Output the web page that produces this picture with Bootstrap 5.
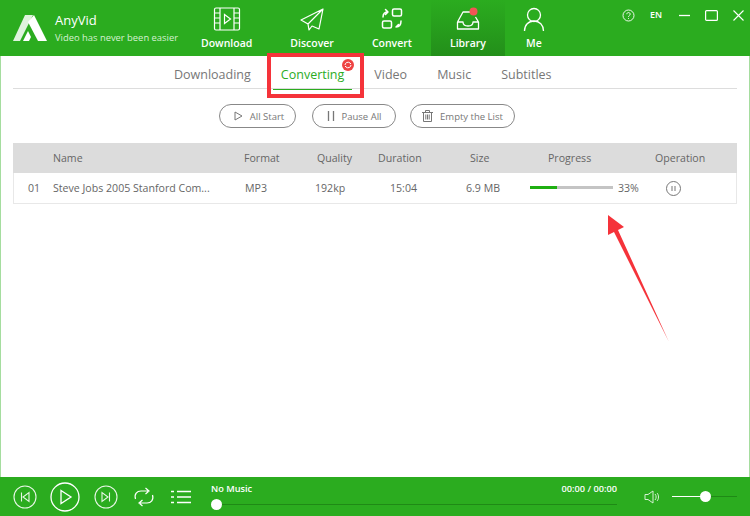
<!DOCTYPE html>
<html lang="en">
<head>
  <meta charset="UTF-8" />
  <meta name="viewport" content="width=device-width, initial-scale=1.0"/>
  <title>AnyVid</title>
  <link href="https://cdn.jsdelivr.net/npm/bootstrap@5.3.3/dist/css/bootstrap.min.css" rel="stylesheet">
  <style>
    body { font-family: "Open Sans", "Noto Sans", sans-serif; color: #666; overflow: hidden; position: relative; }
    svg { display: block; }
    .app-green { background: #2bac1f; color: #fff; }

    .topbar { height: 56px; flex-shrink: 0; }
    .brand { width: 182px; padding-left: 13px; gap: 8px; }
    .brand-name { font-size: 13px; line-height: 16px; margin-bottom: 3px; }
    .brand-sub { font-size: 9.4px; line-height: 14px; color: #d5f0d2; white-space: nowrap; }
    .nav-item-app { padding: 0 19px; height: 56px; font-size: 10.5px; font-weight: 600; line-height: 14px; color: #fff; text-decoration: none; }
    .nav-item-app svg { height: 30px; margin-top: 5px; margin-bottom: 1px; }
    .nav-item-app.active { background: linear-gradient(#2bac1f, #238f1a); }
    .nav-item-me { margin-left: -1px; }
    .win-controls { margin-left: auto; height: 30px; padding-right: 6px; }
    .win-controls span { font-size: 9px; font-weight: 600; width: 14px; text-align: center; margin-left: 14px; }
    .win-min { margin-left: 16px; }
    .win-max, .win-close { margin-left: 15px; }

    .content { border-left: 1px solid #a5dd9f; border-right: 1px solid #a5dd9f; padding: 0 12px; }
    .tabs { height: 33px; border-bottom: 1px solid #ddd; gap: 30px; font-size: 12.5px; color: #777; padding-left: 161px; }
    .tab-item { line-height: 37px; height: 33px; position: relative; white-space: nowrap; }
    .tab-item.active { color: #2bac1f; }
    .tab-item.active::after { content: ""; position: absolute; left: -8px; right: -8px; bottom: -1px; height: 1px; background: #2bac1f; }
    .tab-badge { position: absolute; left: 61px; top: 3px; width: 12px; height: 12px; background: #ee4444; border-radius: 50%; }

    .tool-row { margin: 15px 0 15px 206px; gap: 16px; }
    .btn-tool { height: 24px; padding: 2px 0 0; border: 1px solid #888; border-radius: 12px; font-size: 9.5px; color: #777; gap: 7px; background: #fff; }
    .btn-tool svg { margin-top: -2px; }
    .btn-all { width: 77px; padding-left: 3px; }
    .btn-pause { width: 84px; }
    .btn-empty { width: 105px; margin-left: -2px; }

    .list-head { height: 30px; background: #dcdcdc; font-size: 10.6px; color: #666; padding-top: 2px; }
    .list-row { height: 31px; border: 1px solid #e8e8e8; border-top: 0; font-size: 10.6px; color: #666; padding-top: 1px; }
    .list-head > div, .list-row > div { flex-shrink: 0; white-space: nowrap; }
    .h-num { width: 40px; } .h-name { width: 191px; } .h-format { width: 73px; } .h-quality { width: 61px; }
    .h-duration { width: 92px; } .h-size { width: 78px; } .h-progress { width: 107px; }
    .r-num { width: 39px; padding-left: 14px; } .r-name { width: 192px; } .r-format { width: 70px; } .r-quality { width: 75px; }
    .r-duration { width: 76px; } .r-size { width: 64px; } .r-progress { width: 136px; }
    .bar-track { width: 83px; height: 3px; background: #c4c4c4; margin-right: 5px; margin-top: -1px; }
    .bar-fill { height: 3px; background: #1faf12; }

    .playerbar { height: 39px; flex-shrink: 0; padding-left: 13px; }
    .player-btns { width: 198px; }
    .btn-play { margin-left: 13px; }
    .btn-next { margin-left: 14px; }
    .btn-loop { margin-left: 15px; }
    .btn-list { margin-left: 16px; }
    .seek { width: 406px; align-self: flex-start; font-size: 9.2px; font-weight: 600; line-height: 12px; padding-top: 6px; }
    .seek-track { height: 1px; background: #1f8a16; margin: 9px 0 0 5px; position: relative; }
    .knob { position: absolute; width: 11px; height: 11px; border-radius: 50%; background: #fff; top: -5px; }
    .vol { margin-left: 27px; }
    .vol-track { width: 65px; height: 1px; background: #1f8a16; margin-left: 13px; position: relative; }
    .vol-fill { height: 1px; background: #fff; }

    .mark-box { position: absolute; left: 267px; top: 53px; width: 97px; height: 45px; border: 4px solid #f5333a; }
    .mark-arrow { position: absolute; left: 0; top: 0; pointer-events: none; }
  </style>
</head>
<body>
  <div class="d-flex flex-column vh-100">
    <div class="topbar app-green d-flex">
      <div class="brand d-flex align-items-center">
        <svg width="34" height="27" viewBox="0 0 34 27" fill="#fff"><path d="M0 26 12 0h8L7 26z" opacity=".85"/><path d="M21 0l13 26h-9L15 7z"/><path d="M10 26l5-10 3 6-2 4z"/></svg>
        <div>
          <div class="brand-name">AnyVid</div>
          <div class="brand-sub">Video has never been easier</div>
        </div>
      </div>
      <a class="nav-item-app d-flex flex-column align-items-center" href="#">
        <svg width="28" height="30" viewBox="0 0 28 30" fill="none" stroke="#fff" stroke-width="1.2"><rect x="1.500" y="3" width="25" height="22" rx="1.500"/><path d="M7 3v22M21 3v22M1.500 8H7M1.500 13H7M1.500 18H7M21 8h5.500M21 13h5.500M21 18h5.500"/><path d="M11.500 9.500l6 4.500-6 4.500z"/></svg>
        Download
      </a>
      <a class="nav-item-app d-flex flex-column align-items-center" href="#">
        <svg width="26" height="30" viewBox="0 0 26 30" fill="none" stroke="#fff" stroke-width="1.2" stroke-linejoin="round"><path d="M24 4 2 15l7 4zM24 4l-15 15 1 6 3-4 7 3z"/></svg>
        Discover
      </a>
      <a class="nav-item-app d-flex flex-column align-items-center" href="#">
        <svg width="24" height="30" viewBox="0 0 24 30" fill="none" stroke="#fff" stroke-width="1.500" stroke-linejoin="round" stroke-linecap="round"><rect x="12.500" y="4" width="9" height="7" rx="1.500"/><rect x="2.500" y="16" width="9" height="7" rx="1.500"/><path d="M3 12c0-3 1.500-5 5-5M8 7 5.500 4.500M8 7 5.500 9.500M21 16c0 3-1.500 6-5 6M16 22l2.500-2.500"/></svg>
        Convert
      </a>
      <a class="nav-item-app active d-flex flex-column align-items-center position-relative" href="#">
        <svg width="24" height="30" viewBox="0 0 24 30" fill="none" stroke="#fff" stroke-width="1.300" stroke-linejoin="round"><path d="M1.500 17 7 7h7M1.500 17v7h21v-7l-3-5M1.500 17H7c0 3 2 4 5 4s5-1 5-4h5.500"/><circle cx="17.500" cy="6.500" r="4" fill="#f25555" stroke="none"/></svg>
        Library
      </a>
      <a class="nav-item-app nav-item-me d-flex flex-column align-items-center" href="#">
        <svg width="22" height="30" viewBox="0 0 22 30" fill="none" stroke="#fff" stroke-width="1.300"><circle cx="11" cy="10" r="6.500"/><path d="M1.500 26c0-6 4-10 9.500-10s9.500 4 9.500 10"/></svg>
        Me
      </a>
      <div class="win-controls d-flex align-items-center">
        <svg width="13" height="13" viewBox="0 0 13 13" fill="none" stroke="#fff" stroke-width=".9"><circle cx="6.500" cy="6.500" r="5.500"/><path d="M4.800 5.200c0-2.200 3.400-2.200 3.400 0 0 1.300-1.700 1.200-1.700 2.600M6.500 9v.9"/></svg>
        <span>EN</span>
        <svg class="win-min" width="11" height="11" viewBox="0 0 11 11" stroke="#fff" stroke-width="1.300"><path d="M0 5.500h11"/></svg>
        <svg class="win-max" width="13" height="11" viewBox="0 0 13 11" fill="none" stroke="#fff" stroke-width="1.200"><rect x=".6" y=".6" width="11.800" height="9.800" rx="1"/></svg>
        <svg class="win-close" width="11" height="11" viewBox="0 0 11 11" stroke="#fff" stroke-width="1.100"><path d="M.5.500l10 10M10.500.500l-10 10"/></svg>
      </div>
    </div>

    <div class="content flex-grow-1 bg-white">
      <div class="tabs d-flex">
        <div class="tab-item">Downloading</div>
        <div class="tab-item active">Converting
          <div class="tab-badge d-flex align-items-center justify-content-center">
            <svg width="8" height="8" viewBox="0 0 8 8" fill="none" stroke="#fff" stroke-width="1"><path d="M1 4a3 3 0 0 1 5-2l1 1M7 4a3 3 0 0 1-5 2L1 5"/></svg>
          </div>
        </div>
        <div class="tab-item">Video</div>
        <div class="tab-item">Music</div>
        <div class="tab-item">Subtitles</div>
      </div>

      <div class="tool-row d-flex">
        <button class="btn btn-tool btn-all d-flex align-items-center justify-content-center">
          <svg width="9" height="10" viewBox="0 0 9 10" fill="none" stroke="#777"><path d="M1 1l7 4-7 4z"/></svg>All Start
        </button>
        <button class="btn btn-tool btn-pause d-flex align-items-center justify-content-center">
          <svg width="8" height="10" viewBox="0 0 8 10" stroke="#777" stroke-width="1.300"><path d="M1.500 0v10M6.500 0v10"/></svg>Pause All
        </button>
        <button class="btn btn-tool btn-empty d-flex align-items-center justify-content-center">
          <svg width="11" height="12" viewBox="0 0 11 12" fill="none" stroke="#777"><path d="M0 2.500h11M3.500 2.500V.5h4v2M1.500 2.500v9h8v-9M3.800 4.500v5M5.500 4.500v5M7.200 4.500v5"/></svg>Empty the List
        </button>
      </div>

      <div class="list-head d-flex align-items-center">
        <div class="h-num"></div>
        <div class="h-name">Name</div>
        <div class="h-format">Format</div>
        <div class="h-quality">Quality</div>
        <div class="h-duration">Duration</div>
        <div class="h-size">Size</div>
        <div class="h-progress">Progress</div>
        <div>Operation</div>
      </div>
      <div class="list-row d-flex align-items-center">
        <div class="r-num">01</div>
        <div class="r-name">Steve Jobs 2005 Stanford Com...</div>
        <div class="r-format">MP3</div>
        <div class="r-quality">192kp</div>
        <div class="r-duration">15:04</div>
        <div class="r-size">6.9 MB</div>
        <div class="r-progress d-flex align-items-center">
          <div class="bar-track"><div class="bar-fill" style="width: 33%"></div></div>33%
        </div>
        <div>
          <svg width="15" height="15" viewBox="0 0 15 15" fill="none" stroke="#777"><circle cx="7.500" cy="7.500" r="7"/><path d="M6 5v5M9 5v5"/></svg>
        </div>
      </div>
    </div>

    <div class="playerbar app-green d-flex align-items-center">
      <div class="player-btns d-flex align-items-center">
        <svg width="24" height="24" viewBox="0 0 24 24" fill="none" stroke="#e8f7e6" stroke-width="1.100"><circle cx="12" cy="12" r="11"/><path d="M8.500 7.500v9M16 7.500v9L10 12z"/></svg>
        <svg class="btn-play" width="30" height="30" viewBox="0 0 30 30" fill="none" stroke="#fff" stroke-width="1.300"><circle cx="15" cy="15" r="14"/><path d="M11 8.500 21 15l-10 6.500z"/></svg>
        <svg class="btn-next" width="24" height="24" viewBox="0 0 24 24" fill="none" stroke="#e8f7e6" stroke-width="1.100"><circle cx="12" cy="12" r="11"/><path d="M15.500 7.500v9M8 7.500v9l6-4.500z"/></svg>
        <svg class="btn-loop" width="22" height="22" viewBox="0 0 22 22" fill="none" stroke="#fff" stroke-width="1.200"><path d="M2.500 13C1 8 4 5 8 5h7M12.500 2 16 5l-3.500 3M19.500 9c1.500 5-1.500 8-5.500 8H7M9.500 20 6 17l3.500-3"/></svg>
        <svg class="btn-list" width="20" height="14" viewBox="0 0 20 14" fill="none" stroke="#fff" stroke-width="1.400"><path d="M6 1.500h14M6 7h14M6 12.500h14M0 1.500h3M0 7h3M0 12.500h3"/></svg>
      </div>
      <div class="seek">
        <div class="d-flex justify-content-between"><span>No Music</span><span>00:00 / 00:00</span></div>
        <div class="seek-track"><div class="knob" style="left: -5px"></div></div>
      </div>
      <div class="vol d-flex align-items-center">
        <svg width="15" height="14" viewBox="0 0 15 14" fill="none" stroke="#d5f0d2" stroke-width="1"><path d="M1 4.500h3L9 1v12L4 9.500H1zM11 4c1.500 1.500 1.500 4.500 0 6M13 3c2 2 2 6 0 8"/></svg>
        <div class="vol-track"><div class="vol-fill" style="width: 50%"></div><div class="knob" style="left: 28px"></div></div>
      </div>
    </div>
  </div>

  <div class="mark-box"></div>
  <svg class="mark-arrow" width="750" height="516" viewBox="0 0 750 516"><path d="M608 215 624 227 618 230 669 342 614 232 608 235z" fill="#f5333a"/></svg>

  <script src="https://cdn.jsdelivr.net/npm/bootstrap@5.3.3/dist/js/bootstrap.bundle.min.js"></script>
</body>
</html>
